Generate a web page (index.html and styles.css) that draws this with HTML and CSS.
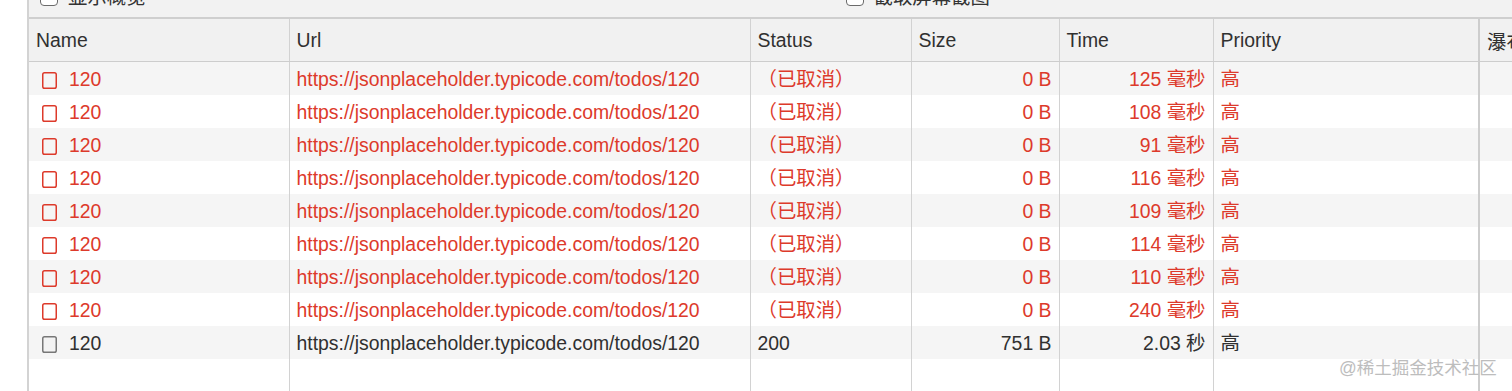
FILE: index.html
```html
<!DOCTYPE html>
<html lang="zh">
<head>
<meta charset="utf-8">
<title>Network</title>
<link rel="stylesheet" href="styles.css">
</head>
<body>
<div class="panel">
  <div class="toolbar">
    <label class="opt opt-overview"><span class="box"></span>显示概览</label>
    <label class="opt opt-shot"><span class="box"></span>截取屏幕截图</label>
  </div>
  <table class="grid">
    <colgroup>
      <col class="c-name"><col class="c-url"><col class="c-status"><col class="c-size"><col class="c-time"><col class="c-prio"><col class="c-fall">
    </colgroup>
    <thead>
      <tr><th>Name</th><th>Url</th><th>Status</th><th>Size</th><th>Time</th><th>Priority</th><th>瀑布</th></tr>
    </thead>
    <tbody>
      <tr class="err"><td class="name"><svg class="ico" viewBox="0 0 15 17"><rect x="0.75" y="0.75" width="13.5" height="15.5" rx="1.8"/></svg>120</td><td>https://jsonplaceholder.typicode.com/todos/120</td><td>（已取消）</td><td class="num">0 B</td><td class="num">125 毫秒</td><td>高</td><td></td></tr>
      <tr class="err"><td class="name"><svg class="ico" viewBox="0 0 15 17"><rect x="0.75" y="0.75" width="13.5" height="15.5" rx="1.8"/></svg>120</td><td>https://jsonplaceholder.typicode.com/todos/120</td><td>（已取消）</td><td class="num">0 B</td><td class="num">108 毫秒</td><td>高</td><td></td></tr>
      <tr class="err"><td class="name"><svg class="ico" viewBox="0 0 15 17"><rect x="0.75" y="0.75" width="13.5" height="15.5" rx="1.8"/></svg>120</td><td>https://jsonplaceholder.typicode.com/todos/120</td><td>（已取消）</td><td class="num">0 B</td><td class="num">91 毫秒</td><td>高</td><td></td></tr>
      <tr class="err"><td class="name"><svg class="ico" viewBox="0 0 15 17"><rect x="0.75" y="0.75" width="13.5" height="15.5" rx="1.8"/></svg>120</td><td>https://jsonplaceholder.typicode.com/todos/120</td><td>（已取消）</td><td class="num">0 B</td><td class="num">116 毫秒</td><td>高</td><td></td></tr>
      <tr class="err"><td class="name"><svg class="ico" viewBox="0 0 15 17"><rect x="0.75" y="0.75" width="13.5" height="15.5" rx="1.8"/></svg>120</td><td>https://jsonplaceholder.typicode.com/todos/120</td><td>（已取消）</td><td class="num">0 B</td><td class="num">109 毫秒</td><td>高</td><td></td></tr>
      <tr class="err"><td class="name"><svg class="ico" viewBox="0 0 15 17"><rect x="0.75" y="0.75" width="13.5" height="15.5" rx="1.8"/></svg>120</td><td>https://jsonplaceholder.typicode.com/todos/120</td><td>（已取消）</td><td class="num">0 B</td><td class="num">114 毫秒</td><td>高</td><td></td></tr>
      <tr class="err"><td class="name"><svg class="ico" viewBox="0 0 15 17"><rect x="0.75" y="0.75" width="13.5" height="15.5" rx="1.8"/></svg>120</td><td>https://jsonplaceholder.typicode.com/todos/120</td><td>（已取消）</td><td class="num">0 B</td><td class="num">110 毫秒</td><td>高</td><td></td></tr>
      <tr class="err"><td class="name"><svg class="ico" viewBox="0 0 15 17"><rect x="0.75" y="0.75" width="13.5" height="15.5" rx="1.8"/></svg>120</td><td>https://jsonplaceholder.typicode.com/todos/120</td><td>（已取消）</td><td class="num">0 B</td><td class="num">240 毫秒</td><td>高</td><td></td></tr>
      <tr class="ok"><td class="name"><svg class="ico" viewBox="0 0 15 17"><rect x="0.75" y="0.75" width="13.5" height="15.5" rx="1.8"/></svg>120</td><td>https://jsonplaceholder.typicode.com/todos/120</td><td>200</td><td class="num">751 B</td><td class="num">2.03 秒</td><td>高</td><td></td></tr>
      <tr class="filler"><td></td><td></td><td></td><td></td><td></td><td></td><td></td></tr>
    </tbody>
  </table>
  <div class="watermark">@稀土掘金技术社区</div>
</div>
</body>
</html>
```

FILE: styles.css
```css
html, body {
  margin: 0;
  padding: 0;
  background: #ffffff;
  overflow: hidden;
}
body {
  width: 1512px;
  height: 391px;
  font-family: "Liberation Sans", "Noto Sans CJK SC", sans-serif;
  font-size: 19.4px;
  color: #303030;
}
.panel {
  position: relative;
  margin-left: 27px;
  border-left: 2px solid #d3d3d3;
  height: 391px;
  overflow: hidden;
}
.toolbar {
  height: 17px;
  background: #f2f2f2;
  border-bottom: 2px solid #cfcfcf;
  display: flex;
  align-items: flex-start;
  overflow: hidden;
  color: #333;
}
.opt {
  display: flex;
  align-items: center;
  gap: 10px;
  margin-top: -14px;
  height: 22px;
  line-height: 22px;
}
.opt-overview { margin-left: 11px; }
.opt-shot { margin-left: 700px; }
.box {
  width: 18px;
  height: 18px;
  border: 1.5px solid #6b6b6b;
  border-radius: 4px;
  background: #fff;
  box-sizing: border-box;
}
.grid {
  border-collapse: collapse;
  table-layout: fixed;
  width: 1700px;
}
.c-name { width: 260px; }
.c-url { width: 461px; }
.c-status { width: 161px; }
.c-size { width: 148px; }
.c-time { width: 154px; }
.c-prio { width: 266px; }
.c-fall { width: 250px; }
th, td {
  border-left: 1.5px solid #d2d2d2;
  padding: 0 7px;
  white-space: nowrap;
  overflow: hidden;
  text-align: left;
  font-weight: normal;
  box-sizing: border-box;
}
th:first-child, td:first-child { border-left: none; }
th:last-child, td:last-child { border-left: 2px solid #cdcdcd; }
thead th {
  height: 42px;
  padding-top: 2px;
  background: #f1f1f1;
  border-bottom: 1px solid #cdcdcd;
  color: #303030;
}
tbody td {
  height: 33px;
  line-height: 31px;
  padding-top: 2px;
  padding-bottom: 0;
}
tbody tr:nth-child(odd) { background: #f5f5f5; }
tbody tr:nth-child(even) { background: #ffffff; }
tbody tr.filler { background: #ffffff; }
tbody tr.filler td { height: 40px; }
td.num { text-align: right; }
td.name { padding-left: 13px; }
.ico {
  width: 15px;
  height: 17px;
  vertical-align: -3px;
  margin-right: 12px;
}
.err td { color: #dd3a2b; }
.err .ico rect { fill: none; stroke: #dd3a2b; stroke-width: 1.5; }
.ok td { color: #303030; }
.ok .ico rect { fill: #f3f3f3; stroke: #777; stroke-width: 1.5; }
.watermark {
  position: absolute;
  left: 1310px;
  top: 357px;
  font-size: 17.5px;
  color: #bdbdbd;
  line-height: 22px;
  white-space: nowrap;
}
```
